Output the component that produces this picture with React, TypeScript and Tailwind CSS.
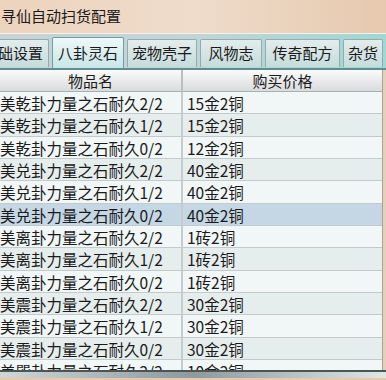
import React from 'react';

const rows = [
  { name: '美乾卦力量之石耐久2/2', price: '15金2铜' },
  { name: '美乾卦力量之石耐久1/2', price: '15金2铜' },
  { name: '美乾卦力量之石耐久0/2', price: '12金2铜' },
  { name: '美兑卦力量之石耐久2/2', price: '40金2铜' },
  { name: '美兑卦力量之石耐久1/2', price: '40金2铜' },
  { name: '美兑卦力量之石耐久0/2', price: '40金2铜' },
  { name: '美离卦力量之石耐久2/2', price: '1砖2铜' },
  { name: '美离卦力量之石耐久1/2', price: '1砖2铜' },
  { name: '美离卦力量之石耐久0/2', price: '1砖2铜' },
  { name: '美震卦力量之石耐久2/2', price: '30金2铜' },
  { name: '美震卦力量之石耐久1/2', price: '30金2铜' },
  { name: '美震卦力量之石耐久0/2', price: '30金2铜' },
  { name: '美巽卦力量之石耐久2/2', price: '10金2铜' },
];

const tabs = [
  { label: '础设置', w: 'w-[52px]', first: true },
  { label: '八卦灵石', w: 'w-[72px]', active: true },
  { label: '宠物壳子', w: 'w-[70px]' },
  { label: '风物志', w: 'w-[62px]' },
  { label: '传奇配方', w: 'w-[75px]' },
  { label: '杂货', w: 'w-[40px]' },
  { label: '', w: 'w-[20px]' },
];

const font = { fontFamily: '"Noto Sans CJK SC", "Noto Sans", sans-serif' };

export default function App() {
  return (
    <div className="w-[386px] h-[380px] overflow-hidden flex flex-col bg-[#e9cfb8] text-[#1a1a1a]" style={font}>
      {/* title */}
      <div className="h-[33px] shrink-0 flex items-center pl-[1px] text-[15px] bg-gradient-to-r from-[#ecd3bd] via-[#efdccb] to-[#e6c9ae]">
        寻仙自动扫货配置
      </div>

      {/* tab strip */}
      <div className="h-[35px] shrink-0 border-t border-[#f4f2ee] bg-gradient-to-r from-[#c7d2d4] via-[#c2d4d8] to-[#9fd8d2] flex items-end gap-[3px] overflow-hidden">
        {tabs.map((t, i) => (
          <div
            key={i}
            className={
              'shrink-0 flex items-center text-[15px] whitespace-nowrap border border-b-0 rounded-t-[2px] ' +
              t.w +
              (t.first ? ' -ml-[3px] justify-end pr-[5px]' : ' justify-center') +
              (t.active
                ? ' h-[31px] bg-gradient-to-b from-[#eef8f8] to-[#c9e6e8] border-[#6f9fa2]'
                : ' h-[28px] mb-[1px] bg-gradient-to-b from-[#e4ecec] to-[#c6dcdc] border-[#8fadae]')
            }
          >
            {t.label}
          </div>
        ))}
      </div>
      <div className="h-[2px] shrink-0 bg-[#5e8f90]" />

      {/* table */}
      <div className="h-[300px] shrink-0 bg-[#f0f5f5] flex flex-col overflow-hidden border-r border-[#9aa6a6] mr-[3px]">
        <div className="h-[22px] shrink-0 grid grid-cols-[183px_1fr] bg-gradient-to-b from-[#fafafa] to-[#d9dcdd] border-b border-[#a9b0b2] text-[15px]">
          <div className="flex items-center justify-center border-r-2 border-[#b9bfc0]">物品名</div>
          <div className="flex items-center justify-center">购买价格</div>
        </div>
        {rows.map((r, i) => (
          <div
            key={i}
            className={
              'h-[22.35px] shrink-0 grid grid-cols-[183px_1fr] border-b border-[#c3cacb] text-[15.5px] ' +
              (i === 5 ? 'bg-[#c5d6e4]' : i % 2 === 0 ? 'bg-[#f1f6f6]' : 'bg-[#e6eded]')
            }
          >
            <div className="flex items-center border-r-2 border-[#c6cccd] whitespace-nowrap overflow-hidden">{r.name}</div>
            <div className="flex items-center pl-[4px] whitespace-nowrap">{r.price}</div>
          </div>
        ))}
      </div>

      {/* bottom */}
      <div className="h-[2px] shrink-0 bg-[#4a5556]" />
      <div className="h-[6px] shrink-0 bg-gradient-to-r from-[#cfd6d8] via-[#8e9aa0] to-[#dfe6e6]" />
      <div className="flex-1 bg-[#e9c7a8]" />
    </div>
  );
}
